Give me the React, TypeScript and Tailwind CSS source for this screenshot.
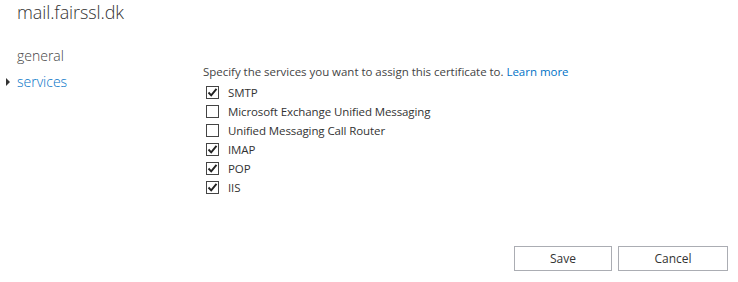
const services = [
  { label: "SMTP", checked: true },
  { label: "Microsoft Exchange Unified Messaging", checked: false },
  { label: "Unified Messaging Call Router", checked: false },
  { label: "IMAP", checked: true },
  { label: "POP", checked: true },
  { label: "IIS", checked: true },
];

const Check = ({ checked }: { checked: boolean }) => (
  <span className="flex h-[13px] w-[13px] items-center justify-center border border-[#444] bg-white">
    {checked && (
      <svg width="11" height="11" viewBox="0 0 11 11">
        <path d="M1.5 5.5 L4.2 8.3 L9.5 1.8" fill="none" stroke="#222" strokeWidth="1.9" />
      </svg>
    )}
  </span>
);

const App = () => {
  return (
    <div className="relative h-[282px] w-[738px] bg-white font-['Open_Sans',sans-serif] text-[#333]">
      <h1 className="absolute left-[17px] top-[-1px] text-[18px] font-light tracking-[-0.1px] text-[#333]">mail.fairssl.dk</h1>
      <div className="flex pt-[43px]">
        <nav className="w-[203px] shrink-0 pl-[17px] text-[14px] font-light leading-[26px]">
          <div className="text-[#444]">general</div>
          <div className="relative text-[#0072c6]">
            <span className="absolute left-[-11px] top-[9px] h-0 w-0 border-y-[4px] border-l-[4px] border-y-transparent border-l-[#333]" />
            services
          </div>
        </nav>
        <div className="w-[535px] pr-[10px] pt-[21px]">
          <p className="text-[11.5px] leading-[16px] tracking-[-0.03px] text-[#444]">
            Specify the services you want to assign this certificate to.{" "}
            <span className="text-[#0072c6]">Learn more</span>
          </p>
          <ul className="mt-[3px] pl-[3px]">
            {services.map((s) => (
              <li key={s.label} className="flex h-[19px] items-center gap-[9px] text-[11.5px] tracking-[-0.1px] text-[#333]">
                <Check checked={s.checked} />
                {s.label}
              </li>
            ))}
          </ul>
          <div className="mt-[49px] flex justify-end gap-[6px]">
            <button className="h-[25px] w-[98px] border border-[#abadb3] bg-white text-[12px] text-[#333]">Save</button>
            <button className="h-[25px] w-[110px] border border-[#abadb3] bg-white text-[12px] text-[#333]">Cancel</button>
          </div>
        </div>
      </div>
    </div>
  );
};

export default App;
